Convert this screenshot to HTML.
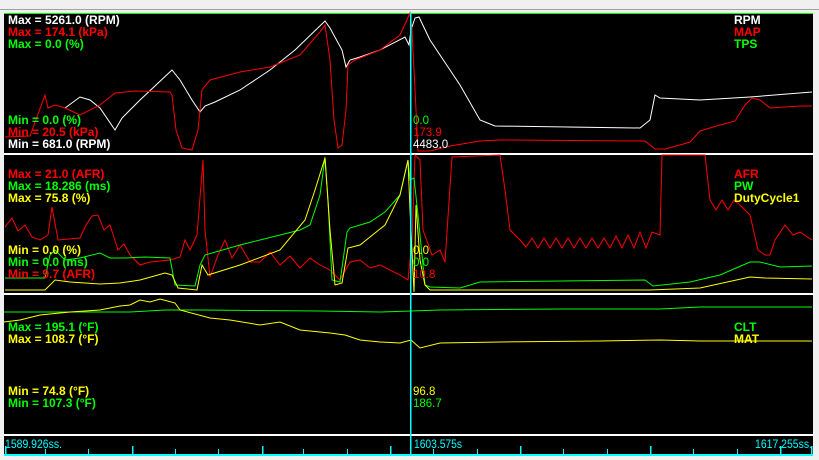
<!DOCTYPE html><html><head><style>
body{margin:0;width:819px;height:460px;background:#f0f0f0;overflow:hidden;position:relative;font-family:"Liberation Sans",Arial,sans-serif}
svg{position:absolute;left:0;top:0}
text{font-size:12px;font-weight:bold}
.n{font-weight:normal;font-size:11.5px}
</style></head><body>
<svg width="819" height="460" viewBox="0 0 819 460">
<rect x="0" y="9" width="819" height="1" fill="#a0a0a0"/>
<rect x="4" y="13" width="809" height="443" fill="#000"/>
<rect x="4" y="13" width="809" height="1" fill="#0f0"/>
<rect x="4" y="153" width="809" height="2" fill="#fff"/>
<rect x="4" y="293" width="809" height="2" fill="#fff"/>
<rect x="4" y="434" width="809" height="2" fill="#fff"/>
<rect x="4" y="454" width="809" height="2" fill="#0ff"/>
<g fill="none" stroke-width="1">
<polyline stroke="#fff" points="65,108 80,97 90,100 100,108 115,130 122,118 140,100 172,70 180,80 192,100 200,112 205,106 215,102 240,90 270,70 295,50 325,21 330,28 342,50 346,67 350,60 360,57 380,50 405,37 409,45 411,30 415,18 419,17 430,40 460,85 480,120 495,126 640,128 650,120 655,95 660,98 700,100 750,97 812,92"/>
<polyline stroke="#f00" points="5,137 30,136 45,95 48,108 55,105 65,108 80,115 100,105 115,93 135,91 170,92 172,95 176,130 182,148 192,150 198,130 202,90 210,80 240,72 270,67 300,55 320,32 325,25 330,60 334,120 338,148 342,145 346,110 348,65 355,60 380,50 400,35 410,13 412,30 417,130 418,151 430,151 450,146 480,141 500,140 645,141 655,149 665,149 680,145 690,142 700,131 720,125 735,121 745,105 752,98 760,100 770,108 800,106 812,106"/>
<polyline stroke="#f00" points="5,227 12,218 18,231 25,225 32,237 40,240 48,235 52,207 58,240 80,238 86,225 92,216 98,215 104,230 110,225 118,250 124,244 130,255 140,265 150,262 170,260 180,257 185,240 190,250 197,235 203,160 205,230 210,277 218,255 225,240 232,258 240,245 250,262 260,262 270,252 280,265 290,256 300,268 310,258 320,265 330,270 340,280 350,262 360,260 370,268 380,265 390,270 400,275 408,280 412,240 415,155 420,160 423,230 432,255 440,250 445,262 452,157 500,155 505,190 510,230 520,240 526,247 532,238 538,248 544,238 550,248 556,238 562,248 568,238 574,248 580,238 586,248 592,238 598,248 604,238 610,248 616,236 622,248 628,235 634,248 640,232 646,248 652,232 660,235 662,155 705,155 710,200 716,210 722,200 728,210 734,200 740,205 750,215 758,250 765,255 770,255 775,240 785,225 793,235 800,232 812,240"/>
<polyline stroke="#0f0" points="5,278 45,278 50,255 55,250 65,260 80,258 100,253 110,258 125,258 145,257 170,258 175,285 195,286 200,265 205,255 240,245 300,230 310,225 320,195 325,157 328,200 332,280 340,282 347,232 350,228 370,222 385,212 400,195 408,160 410,180 414,178 418,215 425,285 430,287 460,288 480,282 645,280 653,286 690,282 720,275 750,262 760,262 780,267 812,266"/>
<polyline stroke="#ff0" points="5,290 45,290 55,280 70,282 100,284 120,283 140,280 165,273 172,275 178,288 197,290 202,265 208,275 240,265 280,250 305,220 315,190 325,158 330,230 335,285 342,283 348,248 360,245 385,225 400,195 408,160 410,210 414,292 416,205 420,260 425,285 430,290 460,290 650,290 700,288 750,277 765,278 812,279"/>
<polyline stroke="#0f0" points="4,312 130,312 165,310 200,310 320,311 380,312 440,310 560,309 660,309 700,307 812,307"/>
<polyline stroke="#ff0" points="4,322 20,320 40,315 70,312 100,310 120,306 130,305 140,300 150,302 160,299 175,303 180,310 210,318 230,320 260,325 280,322 300,330 330,333 345,335 360,340 380,342 400,343 411,340 420,348 440,343 500,342 600,341 660,340 700,341 812,341"/>
</g>
<rect x="410" y="13" width="1.5" height="443" fill="#0ff"/>
<g fill="#0ff">
<rect x="45" y="449" width="1" height="5"/><rect x="88" y="449" width="1" height="5"/><rect x="132" y="446" width="1.5" height="8"/><rect x="175" y="449" width="1" height="5"/><rect x="218" y="449" width="1" height="5"/><rect x="262" y="446" width="1.5" height="8"/>
<rect x="303" y="449" width="1" height="5"/><rect x="347" y="449" width="1" height="5"/><rect x="390" y="446" width="1.5" height="8"/><rect x="433" y="449" width="1" height="5"/><rect x="477" y="449" width="1" height="5"/><rect x="520" y="446" width="1.5" height="8"/><rect x="563" y="449" width="1" height="5"/><rect x="607" y="449" width="1" height="5"/><rect x="650" y="446" width="1.5" height="8"/><rect x="693" y="449" width="1" height="5"/><rect x="737" y="449" width="1" height="5"/><rect x="780" y="446" width="1.5" height="8"/><rect x="5" y="446" width="1.5" height="8"/><rect x="811" y="446" width="1.5" height="8"/>
</g>
<text x="8" y="24" fill="#fff">Max = 5261.0 (RPM)</text>
<text x="8" y="36" fill="#f00">Max = 174.1 (kPa)</text>
<text x="8" y="48" fill="#0f0">Max = 0.0 (%)</text>
<text x="8" y="124" fill="#0f0">Min = 0.0 (%)</text>
<text x="8" y="136" fill="#f00">Min = 20.5 (kPa)</text>
<text x="8" y="148" fill="#fff">Min = 681.0 (RPM)</text>
<text x="734" y="24" fill="#fff">RPM</text>
<text x="734" y="36" fill="#f00">MAP</text>
<text x="734" y="48" fill="#0f0">TPS</text>
<text class="n" x="413" y="124" fill="#0f0">0.0</text>
<text class="n" x="413" y="136" fill="#f00">173.9</text>
<text class="n" x="413" y="148" fill="#fff">4483.0</text>
<text x="8" y="178" fill="#f00">Max = 21.0 (AFR)</text>
<text x="8" y="190" fill="#0f0">Max = 18.286 (ms)</text>
<text x="8" y="202" fill="#ff0">Max = 75.8 (%)</text>
<text x="8" y="254" fill="#ff0">Min = 0.0 (%)</text>
<text x="8" y="266" fill="#0f0">Min = 0.0 (ms)</text>
<text x="8" y="278" fill="#f00">Min = 9.7 (AFR)</text>
<text x="734" y="178" fill="#f00">AFR</text>
<text x="734" y="190" fill="#0f0">PW</text>
<text x="734" y="202" fill="#ff0">DutyCycle1</text>
<text class="n" x="413" y="254" fill="#ff0">0.0</text>
<text class="n" x="413" y="266" fill="#0f0">0.0</text>
<text class="n" x="413" y="278" fill="#f00">10.8</text>
<text x="8" y="331" fill="#0f0">Max = 195.1 (°F)</text>
<text x="8" y="343" fill="#ff0">Max = 108.7 (°F)</text>
<text x="8" y="395" fill="#ff0">Min = 74.8 (°F)</text>
<text x="8" y="407" fill="#0f0">Min = 107.3 (°F)</text>
<text x="734" y="331" fill="#0f0">CLT</text>
<text x="734" y="343" fill="#ff0">MAT</text>
<text class="n" x="413" y="395" fill="#ff0">96.8</text>
<text class="n" x="413" y="407" fill="#0f0">186.7</text>
<text class="n" x="5" y="448" fill="#0ff" textLength="57" lengthAdjust="spacingAndGlyphs">1589.926ss.</text>
<text class="n" x="414" y="448" fill="#0ff" textLength="48" lengthAdjust="spacingAndGlyphs">1603.575s</text>
<text class="n" x="755" y="448" fill="#0ff" textLength="57" lengthAdjust="spacingAndGlyphs">1617.255ss.</text>
</svg>
</body></html>
